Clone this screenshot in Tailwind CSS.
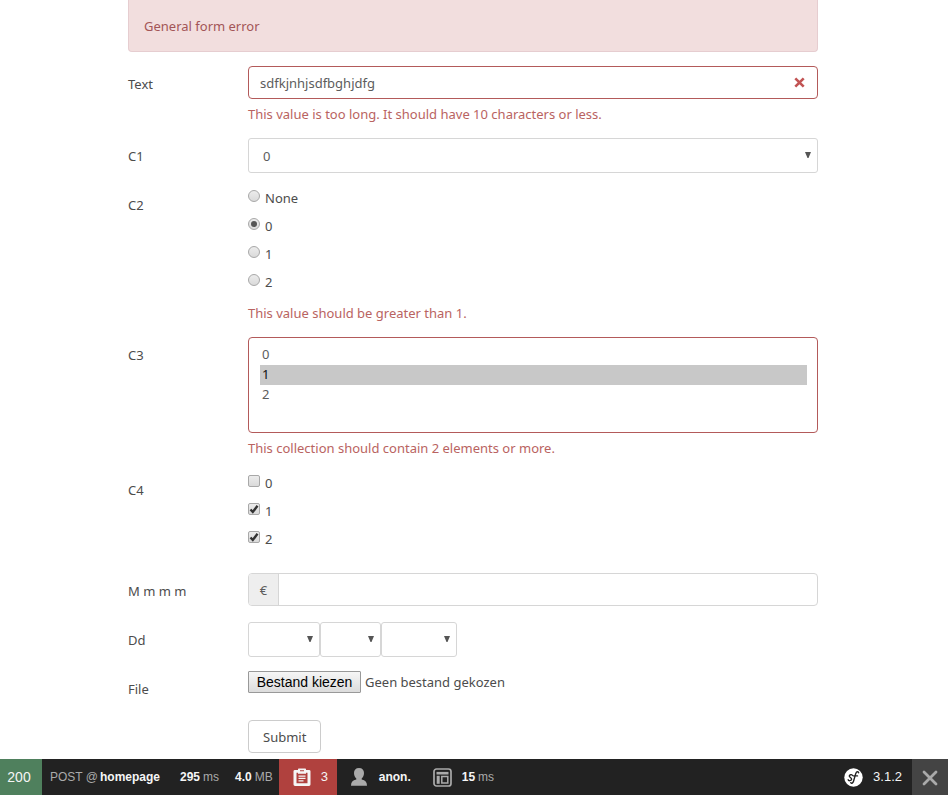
<!DOCTYPE html>
<html lang="nl">
<head>
<meta charset="utf-8">
<meta name="viewport" content="width=device-width, initial-scale=1">
<title>homepage</title>
<script src="https://cdn.jsdelivr.net/npm/@tailwindcss/browser@4"></script>
</head>
<body class="min-h-screen bg-white font-['Noto_Sans',sans-serif] text-[13px] leading-5 text-[#4c4c4c]">
<main class="pr-[130px] pb-[42px] pl-32">
  <div role="alert" class="mb-3.5 rounded-b border border-t-0 border-[#e6cdd0] bg-[#f2dede] px-[15px] pt-4 pb-[15px] text-[#a35557]">General form error</div>

  <form onsubmit="return false">
    <div class="mb-3.5 grid grid-cols-[120px_1fr]">
      <label for="text" class="pt-2">Text</label>
      <div>
        <div class="relative">
          <input id="text" type="text" value="sdfkjnhjsdfbghjdfg" aria-describedby="text-error" class="block h-[33px] w-full rounded border border-[#b35a5a] bg-white pr-10 pl-[11px] text-[#5c5c5c]">
          <svg class="pointer-events-none absolute top-[11px] right-[13px] size-[11px]" viewBox="0 0 11 11" fill="none" stroke="#c25454" stroke-width="2.6" aria-hidden="true"><path d="M1.300 1.300l8.400 8.400M9.700 1.300l-8.400 8.400"/></svg>
        </div>
        <p id="text-error" class="pt-[5px] text-[#b96361]">This value is too long. It should have 10 characters or less.</p>
      </div>
    </div>

    <div class="mb-3.5 grid grid-cols-[120px_1fr]">
      <label for="c1" class="pt-2">C1</label>
      <div class="relative">
        <select id="c1" class="block h-[35px] w-full appearance-none rounded-[3px] border border-[#d6d6d6] bg-white px-3.5 pt-px text-[#5c5c5c]"><option>0</option><option>1</option><option>2</option></select>
        <svg class="pointer-events-none absolute top-3.5 right-[7px] h-1.5 w-1.5" viewBox="0 0 6 6" fill="#555" aria-hidden="true"><path d="M0 0h6L3.500 6h-1z"/></svg>
      </div>
    </div>

    <div role="radiogroup" aria-labelledby="c2-label" class="mb-3.5 grid grid-cols-[120px_1fr]">
      <span id="c2-label" class="pt-2">C2</span>
      <div class="pt-px">
        <div class="flex flex-col items-start gap-2">
          <label class="flex gap-[5px]"><input type="radio" name="c2" class="mt-0.5 grid size-3 appearance-none place-items-center rounded-full border border-[#a8a8a8] bg-linear-to-b from-[#ececec] to-[#dadada] before:size-1.5 before:rounded-full checked:before:bg-[#555]"> None</label>
          <label class="flex gap-[5px]"><input type="radio" name="c2" checked class="mt-0.5 grid size-3 appearance-none place-items-center rounded-full border border-[#a8a8a8] bg-linear-to-b from-[#ececec] to-[#dadada] before:size-1.5 before:rounded-full checked:before:bg-[#555]"> 0</label>
          <label class="flex gap-[5px]"><input type="radio" name="c2" class="mt-0.5 grid size-3 appearance-none place-items-center rounded-full border border-[#a8a8a8] bg-linear-to-b from-[#ececec] to-[#dadada] before:size-1.5 before:rounded-full checked:before:bg-[#555]"> 1</label>
          <label class="flex gap-[5px]"><input type="radio" name="c2" class="mt-0.5 grid size-3 appearance-none place-items-center rounded-full border border-[#a8a8a8] bg-linear-to-b from-[#ececec] to-[#dadada] before:size-1.5 before:rounded-full checked:before:bg-[#555]"> 2</label>
        </div>
        <p class="pt-[11px] text-[#b96361]">This value should be greater than 1.</p>
      </div>
    </div>

    <div class="mb-3.5 grid grid-cols-[120px_1fr]">
      <label for="c3" class="pt-2">C3</label>
      <div>
        <select id="c3" multiple size="4" aria-describedby="c3-error" class="block h-24 w-full appearance-none overflow-hidden rounded border border-[#b35a5a] bg-white py-[7px] pr-2.5 pl-[11px] text-[#5c5c5c]">
          <option class="h-5 px-0.5 py-0 leading-5">0</option>
          <option selected class="h-5 bg-linear-to-b from-[#c8c8c8] to-[#c8c8c8] px-0.5 py-0 leading-5">1</option>
          <option class="h-5 px-0.5 py-0 leading-5">2</option>
        </select>
        <p id="c3-error" class="pt-[5px] text-[#b96361]">This collection should contain 2 elements or more.</p>
      </div>
    </div>

    <div role="group" aria-labelledby="c4-label" class="mb-6 grid grid-cols-[120px_1fr]">
      <span id="c4-label" class="pt-2">C4</span>
      <div class="flex flex-col items-start gap-2 pt-px">
        <label class="relative flex gap-[5px]"><input type="checkbox" class="peer mt-0.5 size-3 appearance-none rounded-[2px] border border-[#a8a8a8] bg-linear-to-b from-[#ececec] to-[#dadada]"><svg class="absolute top-[3px] left-px hidden size-2.5 peer-checked:block" viewBox="0 0 10 10" fill="none" stroke="#333" stroke-width="2.4" aria-hidden="true"><path d="M1.500 5.500l2.300 2.500L8.500 1.800"/></svg> 0</label>
        <label class="relative flex gap-[5px]"><input type="checkbox" checked class="peer mt-0.5 size-3 appearance-none rounded-[2px] border border-[#a8a8a8] bg-linear-to-b from-[#ececec] to-[#dadada]"><svg class="absolute top-[3px] left-px hidden size-2.5 peer-checked:block" viewBox="0 0 10 10" fill="none" stroke="#333" stroke-width="2.4" aria-hidden="true"><path d="M1.500 5.500l2.300 2.500L8.500 1.800"/></svg> 1</label>
        <label class="relative flex gap-[5px]"><input type="checkbox" checked class="peer mt-0.5 size-3 appearance-none rounded-[2px] border border-[#a8a8a8] bg-linear-to-b from-[#ececec] to-[#dadada]"><svg class="absolute top-[3px] left-px hidden size-2.5 peer-checked:block" viewBox="0 0 10 10" fill="none" stroke="#333" stroke-width="2.4" aria-hidden="true"><path d="M1.500 5.500l2.300 2.500L8.500 1.800"/></svg> 2</label>
      </div>
    </div>

    <div class="mb-4 grid grid-cols-[120px_1fr]">
      <label for="money" class="pt-2">M m m m</label>
      <div class="flex h-[33px] overflow-hidden rounded border border-[#d6d6d6]">
        <span class="flex w-[30px] items-center justify-center border-r border-[#d6d6d6] bg-[#eee] text-[#5c5c5c]">€</span>
        <input id="money" type="text" class="min-w-0 flex-1 px-3">
      </div>
    </div>

    <div role="group" aria-labelledby="dd-label" class="mb-3.5 grid grid-cols-[120px_1fr]">
      <span id="dd-label" class="pt-2">Dd</span>
      <div class="flex">
        <div class="relative w-[72px]">
          <select aria-label="Year" class="block h-[35px] w-full appearance-none rounded-[3px] border border-[#d6d6d6] bg-white px-3"><option></option></select>
          <svg class="pointer-events-none absolute top-3.5 right-[7px] h-1.5 w-1.5" viewBox="0 0 6 6" fill="#555" aria-hidden="true"><path d="M0 0h6L3.500 6h-1z"/></svg>
        </div>
        <div class="relative w-[61px]">
          <select aria-label="Month" class="block h-[35px] w-full appearance-none rounded-[3px] border border-[#d6d6d6] bg-white px-3"><option></option></select>
          <svg class="pointer-events-none absolute top-3.5 right-[7px] h-1.5 w-1.5" viewBox="0 0 6 6" fill="#555" aria-hidden="true"><path d="M0 0h6L3.500 6h-1z"/></svg>
        </div>
        <div class="relative w-[76px]">
          <select aria-label="Day" class="block h-[35px] w-full appearance-none rounded-[3px] border border-[#d6d6d6] bg-white px-3"><option></option></select>
          <svg class="pointer-events-none absolute top-3.5 right-[7px] h-1.5 w-1.5" viewBox="0 0 6 6" fill="#555" aria-hidden="true"><path d="M0 0h6L3.500 6h-1z"/></svg>
        </div>
      </div>
    </div>

    <div class="mb-[27px] grid h-[22px] grid-cols-[120px_1fr]">
      <label for="file" class="pt-2">File</label>
      <div class="flex items-start gap-1">
        <input id="file" type="file" class="hidden">
        <button type="button" onclick="document.getElementById('file').click()" class="h-[22px] w-[113px] rounded-[1px] border border-[#999] bg-linear-to-b from-[#f6f6f6] to-[#dcdcdc] font-['Liberation_Sans',sans-serif] text-sm text-black">Bestand kiezen</button>
        <span class="leading-[22px]">Geen bestand gekozen</span>
      </div>
    </div>

    <button type="submit" class="ml-[120px] h-[33px] rounded border border-[#ccc] bg-white px-3.5">Submit</button>
  </form>
</main>

<footer class="fixed inset-x-0 bottom-0 flex h-9 items-stretch bg-[#222] font-['Liberation_Sans',sans-serif] text-xs text-[#aaa]">
  <a href="#" class="flex w-[42px] items-center justify-center bg-[#4f805d] pr-1 text-sm text-[#f5f5f5]">200</a>
  <a href="#" class="flex items-center gap-0.5 pl-2"><span>POST @</span><b class="text-[#f5f5f5]">homepage</b></a>
  <a href="#" class="flex items-center gap-[3px] pl-5"><b class="text-[#f5f5f5]">295</b><span>ms</span></a>
  <a href="#" class="flex items-center gap-[3px] pr-1.5 pl-4"><b class="text-[#f5f5f5]">4.0</b><span>MB</span></a>
  <a href="#" class="flex w-[58px] items-center gap-2.5 bg-[#b0413e] pl-3.5 text-[13px] text-[#f5f5f5]">
    <svg class="h-[18px] w-[18px]" viewBox="0 0 18 19" preserveAspectRatio="none" aria-hidden="true"><path fill="#f5f5f5" fill-rule="evenodd" d="M2 2h3V1.200Q5 .5 5.800.5h6.400q.8 0 .8.7V2h3q1.500 0 1.500 1.500v14q0 1.500-1.500 1.500H2Q.5 19 .5 17.500v-14Q.5 2 2 2zM3.500 5v11h11V5H13v1H5V5zM7 2.500v1h4v-1z"/><path d="M5.500 8.500h7M5.500 11h7M5.500 13.500h5" stroke="#f5f5f5" stroke-width="1.400"/></svg>
    <span>3</span>
  </a>
  <a href="#" class="flex items-center gap-3 pl-3.5">
    <svg class="h-[18px] w-4" viewBox="0 0 16 18" fill="#aaa" aria-hidden="true"><path d="M8 0c3.300 0 5 2 5 5 0 2.500-1 4.500-2.300 5.500v.9c3.600.5 5.300 2.600 5.300 6.300H0c0-3.700 1.700-5.800 5.300-6.300v-.9C4 9.500 3 7.500 3 5c0-3 1.700-5 5-5z"/></svg>
    <b class="text-[#f5f5f5]">anon.</b>
  </a>
  <a href="#" class="flex items-center gap-[3px] pl-[22px]">
    <svg class="mr-[7px] size-[19px]" viewBox="0 0 19 19" fill="none" stroke="#aaa" aria-hidden="true"><rect x="1" y="1" width="17" height="17" rx="2.500" stroke-width="1.700"/><path d="M3.500 5.200h12" stroke-width="2.600"/><path d="M5.200 7.800v8" stroke-width="3"/><path d="M8.800 8.500h6v6.500h-6z" stroke-width="1.500"/></svg>
    <b class="text-[#f5f5f5]">15</b><span>ms</span>
  </a>
  <a href="#" class="mr-2.5 ml-auto flex items-center gap-2.5 text-[#f5f5f5]">
    <svg class="size-[19px]" viewBox="0 0 19 19" aria-hidden="true"><circle cx="9.500" cy="9.500" r="9.200" fill="#fff"/><path d="M8.300 7.300C7.800 6.300 5.300 6.500 5.300 8c0 1.500 2.600 1.700 2.300 3.400-.3 1.700-3.300 1.600-3.400.3M14.600 4.800c.1-1.500-2-1.600-2.800.6L9.600 13c-.6 2.200-2.100 2.800-2.800 1.700M9.300 7.900h4.200" fill="none" stroke="#222" stroke-width="1.400" stroke-linecap="round"/></svg>
    <span class="text-[13px]">3.1.2</span>
  </a>
  <button type="button" aria-label="Close toolbar" class="flex w-9 items-center justify-center bg-[#444] pt-0.5">
    <svg class="size-4" viewBox="0 0 16 16" fill="none" stroke="#aaa" stroke-width="2.800" stroke-linecap="round" aria-hidden="true"><path d="M2 2l12 12M14 2L2 14"/></svg>
  </button>
</footer>
</body>
</html>
